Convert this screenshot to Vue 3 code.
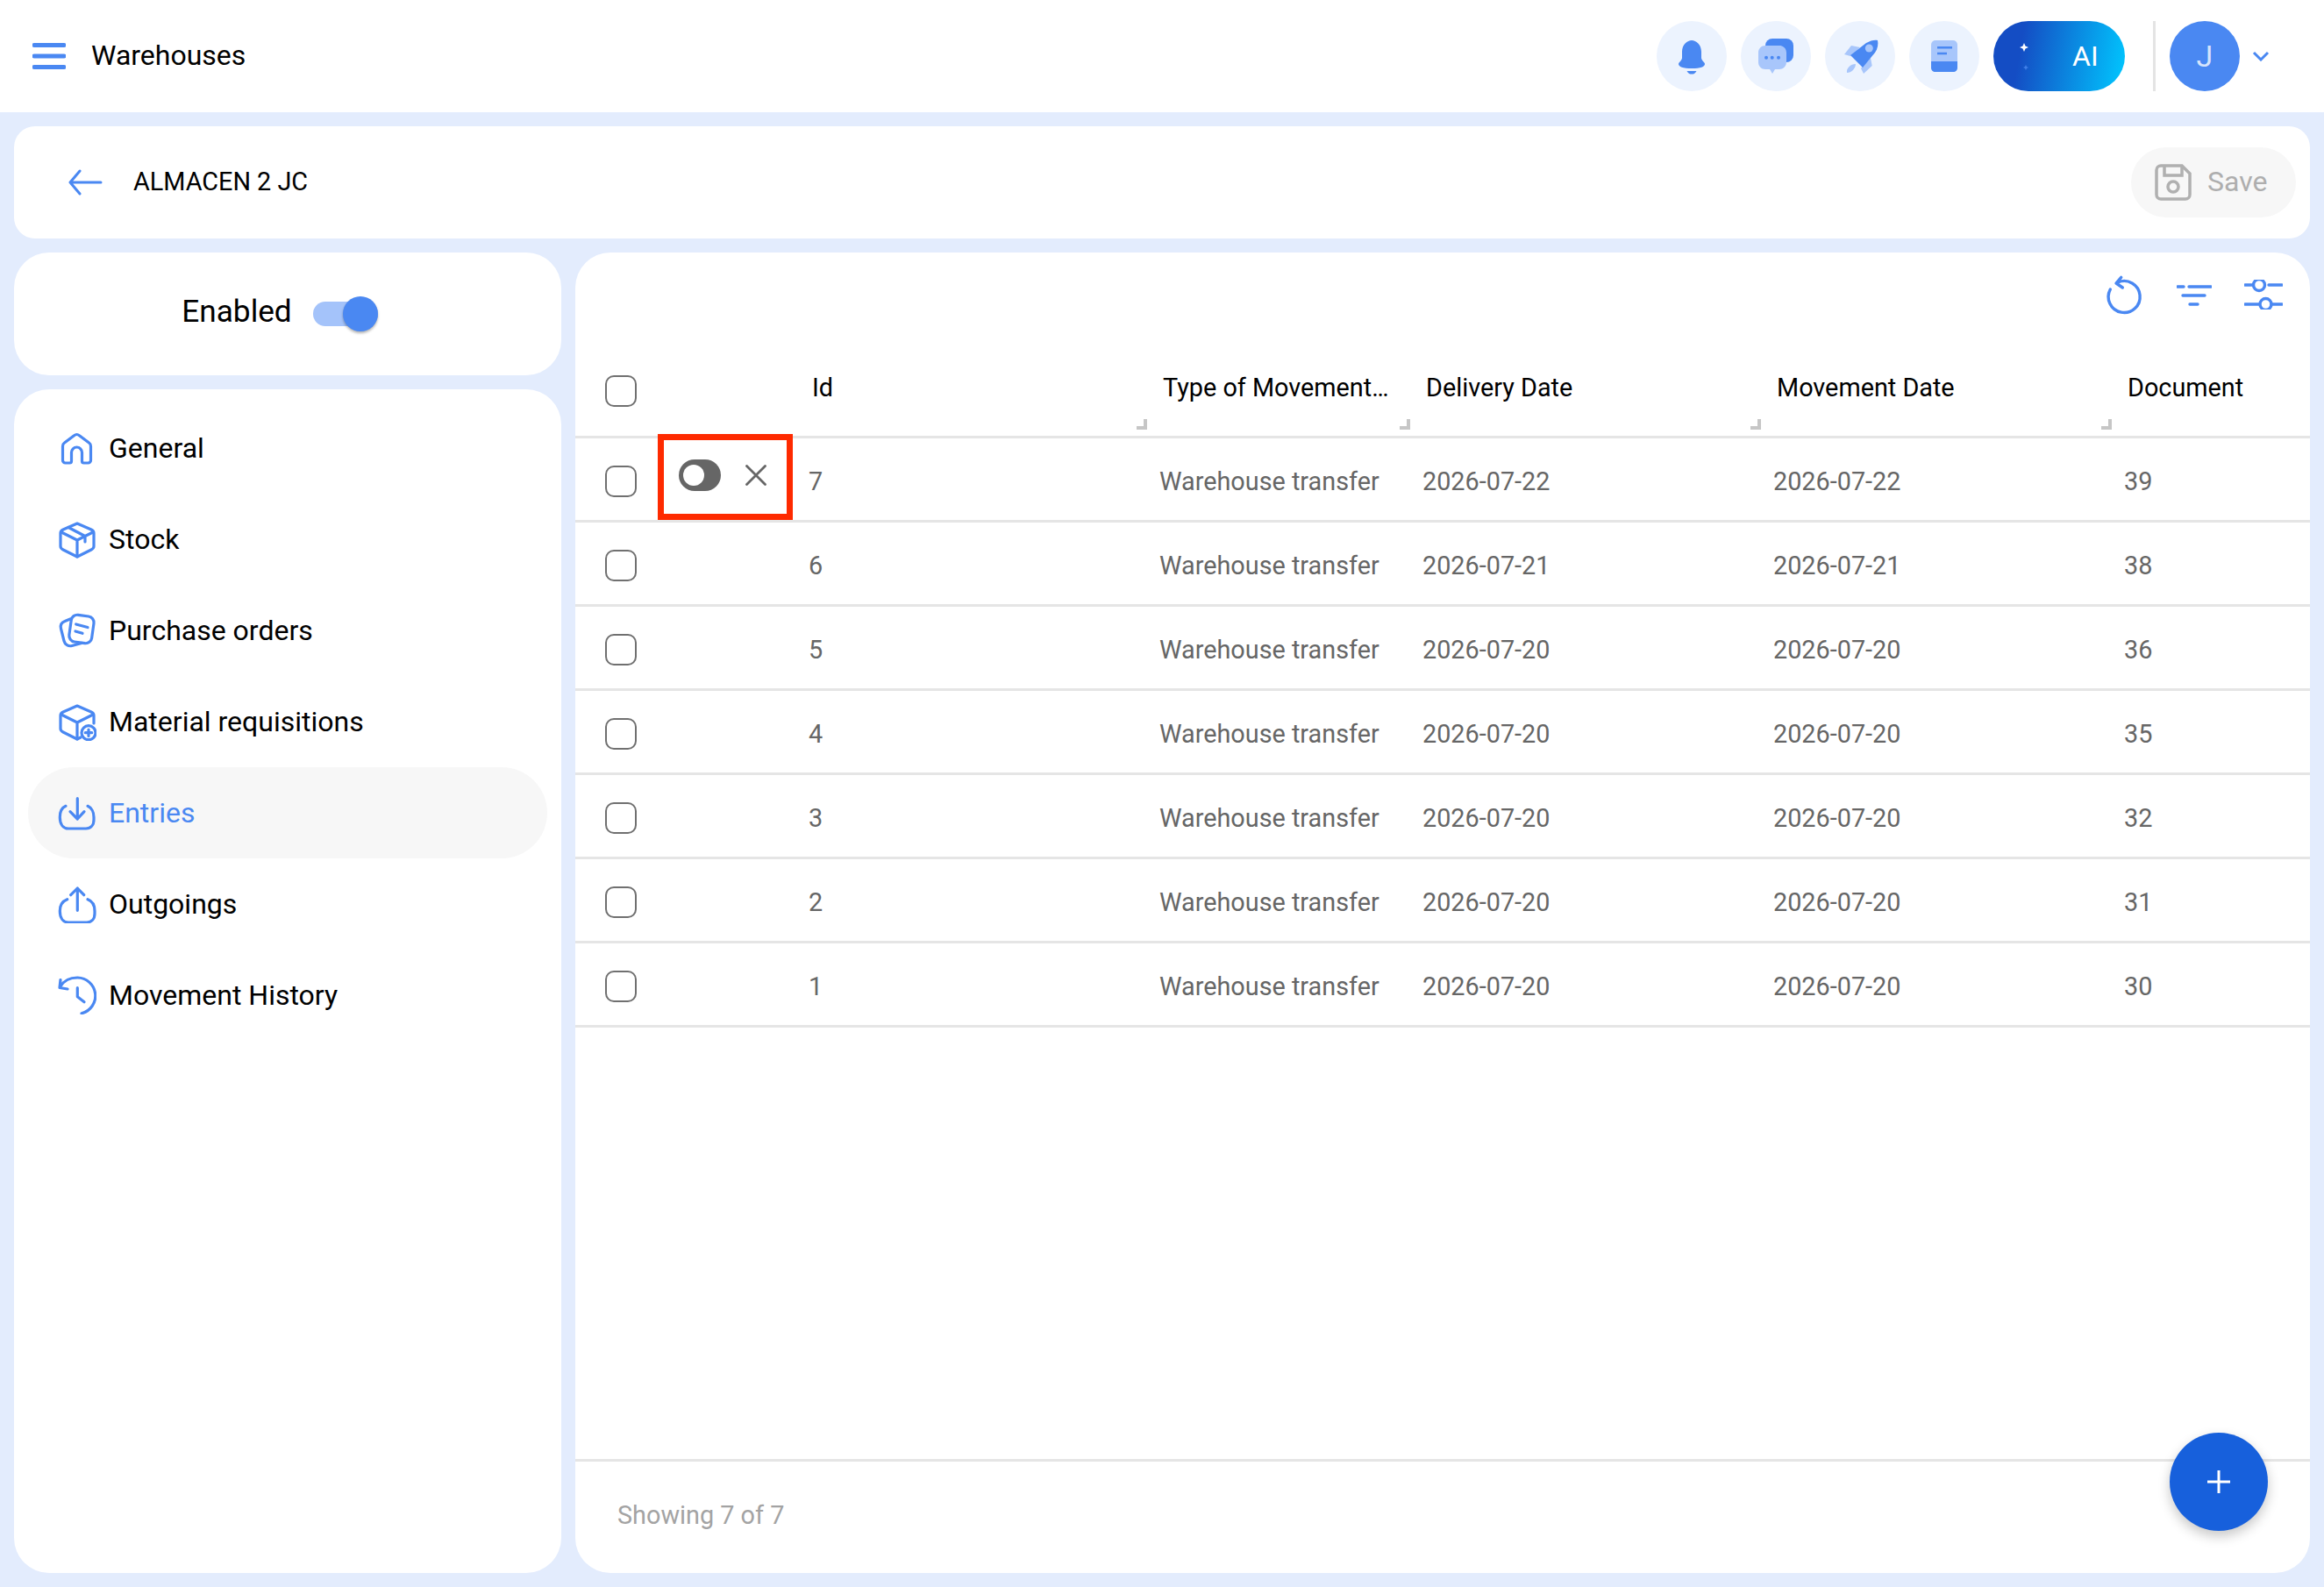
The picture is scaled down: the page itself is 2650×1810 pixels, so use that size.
<script setup>
const navItems = [
  { key: 'general', label: 'General' },
  { key: 'stock', label: 'Stock' },
  { key: 'purchase', label: 'Purchase orders' },
  { key: 'material', label: 'Material requisitions' },
  { key: 'entries', label: 'Entries' },
  { key: 'outgoings', label: 'Outgoings' },
  { key: 'history', label: 'Movement History' }
]

const columns = ['Id', 'Type of Movement…', 'Delivery Date', 'Movement Date', 'Document']

const rows = [
  { id: 7, delivery: '2026-07-22', movement: '2026-07-22', document: 39 },
  { id: 6, delivery: '2026-07-21', movement: '2026-07-21', document: 38 },
  { id: 5, delivery: '2026-07-20', movement: '2026-07-20', document: 36 },
  { id: 4, delivery: '2026-07-20', movement: '2026-07-20', document: 35 },
  { id: 3, delivery: '2026-07-20', movement: '2026-07-20', document: 32 },
  { id: 2, delivery: '2026-07-20', movement: '2026-07-20', document: 31 },
  { id: 1, delivery: '2026-07-20', movement: '2026-07-20', document: 30 }
]
</script>

<template>
  <div class="app">
    <header class="topbar">
      <div class="topbar-left">
        <svg class="menu-icon" width="38" height="30" viewBox="0 0 38 30">
          <path d="M2 2.500H36M2 15H36M2 27.500H36" />
        </svg>
        <span class="module-title">Warehouses</span>
      </div>
      <div class="topbar-right">
        <button class="round-btn" type="button">
          <svg width="80" height="80" viewBox="0 0 80 80">
            <path class="dark" d="M40 22C35 22 29 27 29 35V42C29 45 25 47 25 49C25 52 30 54 40 54C50 54 55 52 55 49C55 47 51 45 51 42V35C51 27 45 22 40 22Z" />
            <path class="dark" d="M34.5 57H45.5C44 60 42 60.5 40 60.5C38 60.5 36 60 34.5 57Z" />
          </svg>
        </button>
        <button class="round-btn" type="button">
          <svg width="80" height="80" viewBox="0 0 80 80">
            <rect class="dark" x="28" y="20" width="32" height="27" rx="8" />
            <path class="light" d="M28 28H44C48.5 28 52 31.5 52 36V47C52 51.500 48.500 55 44 55H39L36 60L33 55H28C23.500 55 20 51.500 20 47V36C20 31.500 23.500 28 28 28Z" />
            <circle class="dark" cx="29" cy="41.700" r="2" />
            <circle class="dark" cx="35.700" cy="41.700" r="2" />
            <circle class="dark" cx="43" cy="41.700" r="2" />
          </svg>
        </button>
        <button class="round-btn" type="button">
          <svg width="80" height="80" viewBox="0 0 80 80">
            <path class="light" d="M22 38L30 28L40 30L29 40Z" />
            <path class="light" d="M53.700 51L44 60L41 54L52 42Z" />
            <path class="light" d="M25 59C24 54 29 49 35 49C35 54 30 59 25 59Z" />
            <path class="dark" d="M29 39L47 25C52 22 57 21 60 22C61 26 60 32 57 36L43 53Z" />
            <circle class="light" cx="50.300" cy="31" r="4.500" />
          </svg>
        </button>
        <button class="round-btn" type="button">
          <svg width="80" height="80" viewBox="0 0 80 80">
            <rect class="light" x="25" y="22" width="30" height="36" rx="5" />
            <path class="dark" d="M25 46H55V53C55 56 53 58 50 58H30C27 58 25 56 25 53Z" />
            <path class="line" d="M32 30.300H49M32 37H43" />
          </svg>
        </button>
        <button class="ai-btn" type="button">
          <svg class="sparkles" width="60" height="70" viewBox="0 0 60 70">
            <path d="M35 25L36.500 28.500L40 30L36.500 31.500L35 35L33.500 31.500L30 30L33.500 28.500Z" fill="#fff" />
            <path d="M37 50L38 52L40 53L38 54L37 56L36 54L34 53L36 52Z" fill="#3f7fe8" />
          </svg>
          <span>AI</span>
        </button>
        <div class="divider"></div>
        <div class="avatar">J</div>
        <svg class="chevron" width="20" height="12" viewBox="0 0 20 12">
          <path d="M2 2L10 10L18 2" />
        </svg>
      </div>
    </header>

    <main class="page">
      <section class="title-card">
        <div class="title-left">
          <svg class="back-icon" width="40" height="30" viewBox="0 0 40 30">
            <path d="M38 15H3M14 2L3 15L14 28" />
          </svg>
          <span class="record-name">ALMACEN 2 JC</span>
        </div>
        <button class="save-btn" type="button" disabled>
          <svg width="42" height="42" viewBox="0 0 42 42">
            <path d="M7 2H31L40 11V35A5 5 0 0 1 35 40H7A5 5 0 0 1 2 35V7A5 5 0 0 1 7 2Z" />
            <path d="M11 2V13H31V2" />
            <circle cx="21" cy="26" r="6" />
          </svg>
          <span class="save-label">Save</span>
        </button>
      </section>

      <div class="columns">
        <aside class="side">
          <div class="enabled-card">
            <span class="enabled-label">Enabled</span>
            <span class="switch"><span class="switch-thumb"></span></span>
          </div>
          <nav class="nav-card">
            <a
              v-for="item in navItems"
              :key="item.key"
              class="nav-item"
              :class="{ active: item.key === 'entries' }"
            >
              <svg class="nav-icon" width="44" height="44" viewBox="0 0 44 44">
                <path v-if="item.key === 'general'" transform="translate(3.500 5)" d="M18 1.500C17 1.500 16 1.900 15 2.700L4 11C2.500 12 2 13.500 2 15V31A3 3 0 0 0 5 34H10A2 2 0 0 0 12 32V22A6 6 0 0 1 24 22V32A2 2 0 0 0 26 34H31A3 3 0 0 0 34 31V15C34 13.500 33.500 12 32 11L21 2.700C20 1.900 19 1.500 18 1.500Z" />
                <g v-else-if="item.key === 'stock'">
                  <path d="M22 4L38 11C40 12 41 13.500 41 15V30C41 32 40 33 38 34L22 42L6 34C4 33 3 32 3 30V15C3 13.500 4 12 6 11Z" />
                  <path d="M4 14L22 23L40 14M22 23V42M12 8.500L31 18.500V25" />
                </g>
                <g v-else-if="item.key === 'purchase'">
                  <rect x="14" y="5" width="26" height="31" rx="7" transform="rotate(8 27 20)" />
                  <path d="M14 9L8 11.500C4 13 2.500 16 3.500 20L7 34C8 38 12 40.500 16 39.500L27 36.500" />
                  <path d="M20.700 15L34 18.500M20 23L28 25.300" />
                </g>
                <g v-else-if="item.key === 'material'">
                  <path d="M26 40L22 42L6 34C4 33 3 32 3 30V15C3 13 4 12 6 11L22 4L38 11C40 12 41 13 41 15V24" />
                  <path d="M4 14L22 23L40 14M22 23V42" />
                  <circle cx="35" cy="34.700" r="8" />
                  <path d="M35 31V38.400M31.300 34.700H38.700" />
                </g>
                <g v-else-if="item.key === 'entries'">
                  <path d="M9 14.300C5 16 2.300 21 2.300 27C2.300 35 6 40 12 40H32C37.500 40 41 36 41 30V27C41 21 38 16 34 14.300" />
                  <path d="M22.300 5.700V28.300M14 20.700L22.300 29L30 20.700" />
                </g>
                <g v-else-if="item.key === 'outgoings'">
                  <path d="M10.700 16.700C6 18.500 2.300 23 2.300 30C2.300 38 6 43 12 43H33C38.500 43 42 39 42 33V30C42 23 39 18.500 34 16.700" />
                  <path d="M22.300 29.300V4.300M14.700 11.700L22.300 4L29.700 11.700" />
                </g>
                <g v-else>
                  <path d="M3 12C6.500 6 13.500 2 22.300 2A20.700 20.700 0 0 1 27 42.800" />
                  <path d="M3 4.500L2 13.500L11 15M22.300 13.700V23.700L30 29.700" />
                </g>
              </svg>
              <span>{{ item.label }}</span>
            </a>
          </nav>
        </aside>

        <section class="table-card">
          <div class="table-tools">
            <svg width="48" height="48" viewBox="0 0 48 48">
              <path d="M18 10A18 18 0 1 1 9.300 18M21.700 4.300L16 11L23.300 16" />
            </svg>
            <svg class="tool-filter" width="40" height="28" viewBox="0 0 40 28">
              <path d="M1 4H8M14 4H39M7 14H32M15 24H24" />
            </svg>
            <svg class="tool-sliders" width="44" height="34" viewBox="0 0 44 34">
              <path d="M1 6H10.500M28 6H43M1 28H17.500M31 28H43" />
              <circle cx="17" cy="6" r="6.500" />
              <circle cx="24.500" cy="28" r="6.500" />
            </svg>
          </div>

          <div class="table">
            <div class="row head">
              <span class="check"></span>
              <span></span>
              <span v-for="(col, i) in columns" :key="col" class="head-cell">
                {{ col }}
                <i v-if="i < columns.length - 1" class="resize"></i>
              </span>
            </div>
            <div v-for="row in rows" :key="row.id" class="row">
              <span class="check"></span>
              <span class="actions">
                <span v-if="row.id === 7" class="mark">
                  <svg width="48" height="36" viewBox="0 0 48 36">
                    <rect width="48" height="36" rx="18" fill="#666" />
                    <circle cx="17" cy="18" r="12" fill="#fff" />
                  </svg>
                  <svg width="24" height="24" viewBox="0 0 24 24">
                    <path d="M1.500 1.500L22.500 22.500M22.500 1.500L1.500 22.500" stroke="#666" stroke-width="2.800" stroke-linecap="round" />
                  </svg>
                </span>
              </span>
              <span>{{ row.id }}</span>
              <span>Warehouse transfer</span>
              <span>{{ row.delivery }}</span>
              <span>{{ row.movement }}</span>
              <span>{{ row.document }}</span>
            </div>
          </div>

          <footer class="table-footer">Showing 7 of 7</footer>
          <button class="fab" type="button">
            <svg width="26" height="26" viewBox="0 0 26 26">
              <path d="M0 13H26M13 0V26" stroke="#fff" stroke-width="3" />
            </svg>
          </button>
        </section>
      </div>
    </main>
  </div>
</template>

<style>
html,
body {
  margin: 0;
  background: #e3ecfd;
}
</style>

<style scoped>
.app {
  width: 2650px;
  height: 1810px;
  display: flex;
  flex-direction: column;
  background: #e3ecfd;
  font-family: Roboto, "Liberation Sans", sans-serif;
  color: #000;
  overflow: hidden;
}

button {
  border: 0;
  padding: 0;
  font-family: inherit;
}

.topbar {
  flex: 0 0 128px;
  display: flex;
  align-items: center;
  justify-content: space-between;
  background: #fff;
  padding: 0 0 0 37px;
}

.topbar-left {
  display: flex;
  align-items: center;
  gap: 29px;
}

.menu-icon path {
  fill: none;
  stroke: #4a88f2;
  stroke-width: 5;
  stroke-linecap: round;
}

.module-title {
  font-size: 32px;
  margin-bottom: 2px;
}

.topbar-right {
  display: flex;
  align-items: center;
  gap: 16px;
  padding-right: 62px;
}

.round-btn {
  width: 80px;
  height: 80px;
  border-radius: 50%;
  background: #ecf3fe;
}

.round-btn svg {
  display: block;
}

.dark {
  fill: #4a88f2;
}

.light {
  fill: #a8c6fb;
}

.line {
  fill: none;
  stroke: #4a88f2;
  stroke-width: 2.500;
}

.ai-btn {
  position: relative;
  width: 150px;
  height: 80px;
  border-radius: 40px;
  background: linear-gradient(100deg, #144dc4 22%, #00c8ff 100%);
  color: #fff;
  font-size: 32px;
  text-align: left;
  padding-left: 90px;
}

.sparkles {
  position: absolute;
  left: 0;
  top: 0;
}

.divider {
  width: 3px;
  height: 80px;
  background: #e4e4e4;
  margin-left: 16px;
}

.avatar {
  width: 80px;
  height: 80px;
  border-radius: 50%;
  background: #4a88f2;
  color: #d6e4fc;
  font-size: 34px;
  display: flex;
  align-items: center;
  justify-content: center;
}

.chevron {
  margin-left: -2px;
}

.chevron path {
  fill: none;
  stroke: #4a88f2;
  stroke-width: 3;
}

.page {
  flex: 1;
  min-height: 0;
  display: flex;
  flex-direction: column;
  gap: 16px;
  padding: 16px;
}

.title-card {
  flex: 0 0 128px;
  box-sizing: border-box;
  display: flex;
  align-items: center;
  justify-content: space-between;
  background: #fff;
  border-radius: 24px;
  padding: 0 16px 0 61px;
}

.title-left {
  display: flex;
  align-items: center;
  gap: 35px;
}

.back-icon path {
  fill: none;
  stroke: #4a88f2;
  stroke-width: 3;
  stroke-linecap: round;
  stroke-linejoin: round;
}

.record-name {
  font-size: 28.800px;
  margin-bottom: 2px;
}

.save-btn {
  width: 188px;
  height: 80px;
  display: flex;
  align-items: center;
  gap: 18px;
  padding-left: 27px;
  box-sizing: border-box;
  background: #f7f7f7;
  border-radius: 40px;
  color: #aeaeae;
  font-size: 32px;
}

.save-label {
  margin-bottom: 2px;
}

.save-btn path,
.save-btn circle {
  fill: none;
  stroke: #b0b0b0;
  stroke-width: 3.500;
}

.columns {
  flex: 1;
  min-height: 0;
  display: flex;
  gap: 16px;
}

.side {
  flex: 0 0 624px;
  display: flex;
  flex-direction: column;
  gap: 16px;
}

.enabled-card {
  flex: 0 0 140px;
  box-sizing: border-box;
  display: flex;
  align-items: center;
  justify-content: center;
  gap: 24px;
  padding-right: 18px;
  background: #fff;
  border-radius: 40px;
}

.enabled-label {
  font-size: 35.200px;
  margin-bottom: 7px;
}

.switch {
  position: relative;
  width: 74px;
  height: 28px;
  border-radius: 14px;
  background: #a4c3fa;
}

.switch-thumb {
  position: absolute;
  right: 0;
  top: -6px;
  width: 40px;
  height: 40px;
  border-radius: 50%;
  background: #4a88f2;
  box-shadow: 0 2px 3px rgba(0, 0, 0, 0.3);
}

.nav-card {
  flex: 1;
  background: #fff;
  border-radius: 40px;
  padding: 15px 16px;
}

.nav-item {
  height: 104px;
  display: flex;
  align-items: center;
  gap: 14px;
  padding-left: 34px;
  border-radius: 52px;
  font-size: 32px;
}

.nav-item.active {
  background: #f7f7f7;
  color: #4a88f2;
}

.nav-icon path,
.nav-icon circle,
.nav-icon rect {
  fill: none;
  stroke: #4a88f2;
  stroke-width: 3.200;
  stroke-linecap: round;
  stroke-linejoin: round;
}

.table-card {
  flex: 1;
  position: relative;
  display: flex;
  flex-direction: column;
  background: #fff;
  border-radius: 40px;
}

.table-tools {
  display: flex;
  align-items: center;
  justify-content: flex-end;
  gap: 37px;
  padding: 24px 31px 0 0;
  height: 47px;
}

.table-tools path,
.table-tools circle {
  fill: none;
  stroke: #4a88f2;
  stroke-width: 3.400;
  stroke-linecap: round;
  stroke-linejoin: round;
}

.tool-filter {
  margin-top: 2px;
}

.table {
  flex: 1;
  min-height: 0;
}

.row {
  display: grid;
  grid-template-columns: 94px 172px 400px 300px 400px 400px 1fr;
  align-items: center;
  box-sizing: border-box;
  height: 96px;
  border-bottom: 3px solid #e5e5e5;
  padding-top: 5px;
  font-size: 28.800px;
  color: #666;
}

.row.head {
  height: 141px;
  padding-top: 35px;
  color: #000;
}

.head-cell {
  position: relative;
  padding-left: 4px;
  margin-top: -8px;
}

.resize {
  position: absolute;
  right: 14px;
  top: 53px;
  width: 8px;
  height: 8px;
  border-right: 4px solid #c6c6c6;
  border-bottom: 4px solid #c6c6c6;
}

.check {
  box-sizing: border-box;
  width: 36px;
  height: 36px;
  margin-left: 34px;
  border: 2px solid #707070;
  border-radius: 10px;
}

.actions {
  position: relative;
  height: 36px;
}

.mark {
  position: absolute;
  left: 0;
  top: -36px;
  box-sizing: border-box;
  width: 154px;
  height: 98px;
  display: flex;
  align-items: center;
  gap: 28px;
  padding: 0 0 5px 17px;
  border: 7px solid #fe2a00;
}

.table-footer {
  box-sizing: border-box;
  flex: 0 0 130px;
  display: flex;
  align-items: center;
  padding: 0 0 6px 48px;
  border-top: 3px solid #e5e5e5;
  font-size: 28.800px;
  color: #a3a3a3;
}

.fab {
  position: absolute;
  right: 48px;
  bottom: 48px;
  width: 112px;
  height: 112px;
  display: flex;
  align-items: center;
  justify-content: center;
  border-radius: 50%;
  background: #1760dc;
  box-shadow: 0 6px 14px rgba(0, 0, 0, 0.22);
}
</style>
